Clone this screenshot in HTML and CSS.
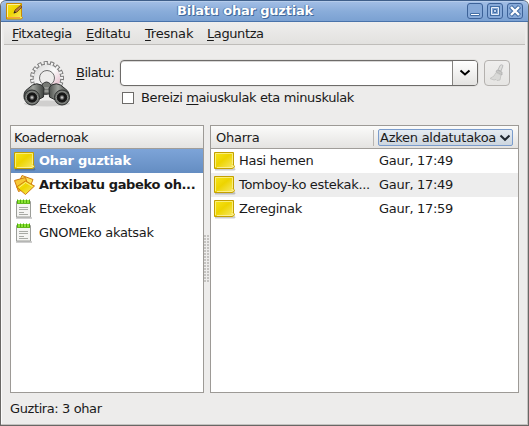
FILE: index.html
```html
<!DOCTYPE html>
<html lang="eu">
<head>
<meta charset="utf-8">
<title>Bilatu ohar guztiak</title>
<link rel="stylesheet" href="styles.css">
</head>
<body>
<svg class="defs" width="0" height="0" aria-hidden="true">
  <defs>
    <linearGradient id="yellow" x1="0" y1="0" x2="1" y2="1">
      <stop offset="0" stop-color="#f8e61c"/><stop offset=".45" stop-color="#edd400"/><stop offset="1" stop-color="#f8ea70"/>
    </linearGradient>
    <linearGradient id="gear" x1="0" y1="0" x2="1" y2="1">
      <stop offset="0" stop-color="#d6d6d6"/><stop offset=".5" stop-color="#fafafa"/><stop offset="1" stop-color="#dfa9bd"/>
    </linearGradient>
    <linearGradient id="barrel" x1="0" y1="0" x2="1" y2="0">
      <stop offset="0" stop-color="#4b4e4b"/><stop offset=".45" stop-color="#a0a39e"/><stop offset="1" stop-color="#3c3f3c"/>
    </linearGradient>
    <radialGradient id="lens">
      <stop offset="0" stop-color="#eee"/><stop offset=".25" stop-color="#777"/><stop offset=".5" stop-color="#111"/><stop offset="1" stop-color="#222"/>
    </radialGradient>
    <symbol id="note" viewBox="0 0 22 20">
      <path d="M1 18.500h19l1-1" fill="none" stroke="#000" stroke-opacity=".2" stroke-width="2"/>
      <path d="M.5 1.500h19v12.500l1 1.500q-.5 2-2.500 2H.5z" fill="url(#yellow)" stroke="#c4a000" stroke-linejoin="round"/>
      <path d="M1.500 16V2.500h17V13" fill="none" stroke="#fbf294" stroke-opacity=".8"/>
      <path d="M3 16.500h15l1.500-1.500-2-.5" fill="none" stroke="#fff3a0" stroke-opacity=".8"/>
    </symbol>
    <symbol id="pad" viewBox="0 0 18 20">
      <path d="M1 19h16" stroke="#000" stroke-opacity=".25" stroke-width="1.500"/>
      <path d="M1.500 2.500h14v15.500h-14z" fill="#f5f5f3" stroke="#9c9e99"/>
      <path d="M2 1h13v4H2z" fill="#8ae234"/>
      <path d="M2.500 .5v4M5.500 .5v4M8.500 .5v4M11.500 .5v4M14.500 .5v4" stroke="#4fae0c" stroke-width="1"/>
      <path d="M2 4.500h13" stroke="#63b81c"/>
      <path d="M4 8.500h9M4 10.500h9M4 13.500h5M4 15.500h9" stroke="#a8aaa5" stroke-width="1"/>
    </symbol>
  </defs>
</svg>
<div class="window">
  <header class="titlebar">
    <svg class="app-icon" viewBox="0 0 17 17">
      <path d="M.5.5h15v13l1 1-1 1.500H.5z" fill="url(#yellow)" stroke="#c98a00"/>
      <path d="M1.500 14V1.500H14" fill="none" stroke="#fcf19a"/>
      <path d="M1 14.500h13" stroke="#f7a13d"/>
      <path d="M8 10l1-3 5.500-4.500 1.500 1.500-5 5z" fill="#b77a3c" stroke="#6e4210" stroke-width=".8"/>
      <path d="M7.500 10.500l1.200-2.500 1.500 1.500z" fill="#222"/>
    </svg>
    <h1 class="title"><span>Bilatu ohar guztiak</span></h1>
    <div class="controls">
      <svg viewBox="0 0 16 16"><rect class="cb" x=".5" y=".5" width="15" height="15" rx="2.500"/><path d="M3.500 10.500h9v2h-9z" fill="#fff" stroke="#426ea5"/></svg>
      <svg viewBox="0 0 16 16"><rect class="cb" x=".5" y=".5" width="15" height="15" rx="2.500"/><path d="M4.500 4.500h7v7h-7z" fill="none" stroke="#426ea5" stroke-width="3"/><path d="M4.500 4.500h7v7h-7z" fill="#86a8d5" stroke="#e7eef8"/><path d="M6.500 6.500h3v3h-3z" fill="#bfd2ed" stroke="#426ea5"/></svg>
      <svg viewBox="0 0 16 16"><rect class="cb" x=".5" y=".5" width="15" height="15" rx="2.500"/><path d="M3.500 3.500l9 9M12.500 3.500l-9 9" stroke="#426ea5" stroke-width="4.400"/><path d="M4 4l8 8M12 4l-8 8" stroke="#fff" stroke-width="2.400"/></svg>
    </div>
  </header>
  <nav class="menubar">
    <a class="m1"><u>F</u>itxategia</a><a class="m2"><u>E</u>ditatu</a><a class="m3"><u>T</u>resnak</a><a class="m4"><u>L</u>aguntza</a>
  </nav>
  <section class="search">
    <svg class="find-icon" viewBox="0 0 48 48">
      <circle cx="24" cy="19" r="14.500" fill="none" stroke="#777" stroke-width="5" stroke-dasharray="3.900 2.173" transform="rotate(-8 24 19)"/>
      <circle cx="24" cy="19" r="13.800" fill="none" stroke="#858585" stroke-width="1.200"/>
      <circle cx="24" cy="19" r="14.500" fill="none" stroke="#f2f2f2" stroke-width="3.200" stroke-dasharray="2.100 3.973" stroke-dashoffset="-.9" transform="rotate(-8 24 19)"/>
      <circle cx="24" cy="19" r="13.200" fill="url(#gear)"/>
      <circle cx="24" cy="19" r="7.500" fill="#edeceb" stroke="#6d6d6d" stroke-width="1"/>
      <ellipse cx="24" cy="44.500" rx="23" ry="3" fill="#000" opacity=".12"/>
      <g transform="translate(.5 2)">
      <path d="M19 23q4-4 8 0l2 4v6h-12v-6z" fill="#767974" stroke="#333" stroke-width="1"/>
      <path d="M20 27h6M20 30h6" stroke="#b9bab7"/>
      <path d="M9 24q4-2.500 9 0l2.500 3-.5 9-8 4L.8 38q-1.500-7 3.200-10z" fill="url(#barrel)" stroke="#2e3030"/>
      <path d="M37 24q-4-2.500-9 0l-2.500 3 .5 9 8 4 11.200-2q1.500-7-3.200-10z" fill="url(#barrel)" stroke="#2e3030"/>
      <circle cx="8.500" cy="36.500" r="7.500" fill="#70736f" stroke="#2e3030"/><circle cx="8.500" cy="36.500" r="5.700" fill="url(#lens)" stroke="#a5a7a3" stroke-width=".7"/>
      <circle cx="38.500" cy="36.500" r="7.500" fill="#70736f" stroke="#2e3030"/><circle cx="38.500" cy="36.500" r="5.700" fill="url(#lens)" stroke="#a5a7a3" stroke-width=".7"/>
      </g>
    </svg>
    <label class="search-label"><span><u>B</u>ilatu:</span></label>
    <div class="fields">
      <div class="entry-row">
        <div class="combo"><div class="entry"></div><div class="drop"><svg width="12" height="8" viewBox="0 0 12 8"><path d="M1.500 1.500L6 5.500l4.500-4" fill="none" stroke="#000" stroke-width="2"/></svg></div></div>
        <div class="clear"><svg width="18" height="18" viewBox="0 0 18 18"><path d="M12 1.500q1.500-1.500 3 0l-2 5.500-3-1z" fill="#dededc" stroke="#bbb"/><path d="M9 6l5 2v3l-6-3z" fill="#c9c9c7" stroke="#aaa" stroke-width=".7"/><path d="M8 8.500l5 2.500-1 5-3 .5-1-1-2 .5-4-1.500q5-2 6-6z" fill="#d9d9d7" stroke="#c0c0be" stroke-width=".8"/></svg></div>
      </div>
      <div class="check-row"><i class="checkbox"></i><span class="check-label">Bereizi <u>m</u>aiuskulak eta minuskulak</span></div>
    </div>
  </section>
  <main class="panes">
    <section class="list notebooks">
      <div class="list-head"><span class="head-first">Koadernoak</span></div>
      <div class="row selected"><svg class="note"><use href="#note"/></svg><b class="all">Ohar guztiak</b></div>
      <div class="row"><svg class="note" viewBox="0 0 22 20">
        <path d="M8 .5l11 4-4 10-11-5z" fill="#fce45c" stroke="#d07a10"/>
        <path d="M.5 5.500l11-3 3 10-10 4z" fill="#f7c935" stroke="#d07a10"/>
        <path d="M2.500 12l9-6 9 5-9 8.500z" fill="url(#yellow)" stroke="#d07a10" stroke-linejoin="round"/>
        <path d="M5 12.500l6.500-5 7 4" fill="none" stroke="#fff3a0" stroke-opacity=".8"/>
      </svg><b class="unfiled">Artxibatu gabeko oh...</b></div>
      <div class="row"><svg class="note" viewBox="0 0 22 20"><use href="#pad" x="1" y="0" width="18" height="20"/></svg><span>Etxekoak</span></div>
      <div class="row"><svg class="note" viewBox="0 0 22 20"><use href="#pad" x="1" y="0" width="18" height="20"/></svg><span>GNOMEko akatsak</span></div>
    </section>
    <div class="grip"><i></i></div>
    <section class="list notes">
      <div class="list-head"><span class="head-name">Oharra</span><div class="sort"><span>Azken aldatutakoa</span><svg width="12" height="8" viewBox="0 0 12 8"><path d="M1.500 1.500L6 5.800l4.500-4.300" fill="none" stroke="#202830" stroke-width="2"/></svg></div></div>
      <div class="row"><svg class="note"><use href="#note"/></svg><span class="name">Hasi hemen</span><span class="date">Gaur, 17:49</span></div>
      <div class="row alt"><svg class="note"><use href="#note"/></svg><span class="name">Tomboy-ko estekak...</span><span class="date">Gaur, 17:49</span></div>
      <div class="row"><svg class="note"><use href="#note"/></svg><span class="name">Zereginak</span><span class="date">Gaur, 17:59</span></div>
    </section>
  </main>
  <footer class="status"><span>Guztira: 3 ohar</span></footer>
</div>
</body>
</html>
```
FILE: styles.css
```css
* { box-sizing: border-box; }
body { margin: 0; background: #fff; font: 13px/16px "DejaVu Sans", sans-serif; letter-spacing: -.3px; color: #1a1a1a; }
.defs { display: block; height: 0; }
h1 { margin: 0; font-size: inherit; }
u { text-decoration: underline; text-decoration-thickness: 1px; text-underline-offset: 2px; text-decoration-skip-ink: none; }
svg { flex: none; display: block; }
span, b, a { white-space: nowrap; }
.window { width: 529px; height: 426px; display: flex; flex-direction: column; background: #edeceb; border: 1px solid #696765; border-top: 0; border-bottom-width: 1px; border-radius: 6px 6px 0 0; box-shadow: inset -1px -1px #c4c2c0, inset 1px 0 #fbfbfb; overflow: hidden; }
.titlebar { flex: none; height: 22px; display: flex; align-items: flex-start; padding: 2px 5px 0 5px; border-top: 1px solid #3f5f8a; border-bottom: 1px solid #4a73aa; background: linear-gradient(#a3bfe6, #8aadda 50%, #7ba1d2); box-shadow: inset 0 1px #b5cceb; border-radius: 5px 5px 0 0; }
.app-icon { width: 17px; height: 17px; }
.title { flex: 1; text-align: center; color: #fff; letter-spacing: -.2px; text-shadow: 1px 1px #41699c, 0 0 1px #41699c, -1px 0 #5a82b8; }
.controls { display: flex; gap: 4px; }
.controls svg { width: 16px; height: 16px; }
.cb { fill: #86a9d8; stroke: #3c6298; }
.menubar { flex: none; height: 23px; margin: 0 3px; padding: 1px 0 0 8px; display: flex; align-items: center; background: linear-gradient(#efeeed, #e2e1df); border-bottom: 1px solid #bfbdba; }
.menubar a { flex: none; }
.m1 { width: 74px; letter-spacing: -.4px; }
.m2 { width: 59px; }
.m3 { width: 62px; letter-spacing: -.2px; }
.m4 { letter-spacing: -.4px; }
.search { flex: none; height: 80px; display: flex; padding: 15px 0 0 22px; }
.find-icon { width: 48px; height: 48px; margin-top: -1px; }
.search-label { width: 49px; padding: 5px 0 0 5px; letter-spacing: -.5px; }
.entry-row { display: flex; gap: 6px; }
.combo { width: 358px; height: 26px; display: flex; border: 1px solid #6d6b69; border-radius: 4px; background: #fff; box-shadow: inset 0 1px #d8d7d6, 0 0 0 1px #e2e1df; }
.entry { flex: 1; }
.drop { width: 25px; display: grid; place-items: center; border-left: 1px solid #858380; background: linear-gradient(#fff, #e4e3e1); border-radius: 0 3px 3px 0; }
.clear { width: 26px; height: 26px; display: grid; place-items: center; border: 1px solid #b4b1ae; border-radius: 4px; background: linear-gradient(#efeeed, #e6e5e3); }
.check-row { display: flex; align-items: center; height: 16px; margin: 4px 0 0 2px; gap: 7px; letter-spacing: -.37px; }
.checkbox { width: 12px; height: 12px; border: 1px solid #6d6b69; background: #fff; }
.panes { flex: none; height: 268px; display: flex; padding-left: 9px; }
.list { border: 1px solid #9d9a96; background: #fff; height: 268px; }
.notebooks { width: 194px; }
.notes { width: 309px; }
.grip { width: 6px; display: grid; place-items: center; }
.grip i { width: 6px; height: 48px; background: radial-gradient(circle at 1px 1px, #b5b3b0 .6px, transparent 1px) 0 0 / 3px 3px; }
.list-head { height: 23px; display: flex; align-items: center; padding: 1px 0 0 3px; letter-spacing: -.25px; background: linear-gradient(#fbfbfa, #e4e3e1); border-bottom: 1px solid #a09d99; }
.notes .list-head { padding-left: 5px; }
.head-name { width: 158px; height: 16px; border-right: 1px solid #b8b5b2; }
.sort { width: 135px; height: 17px; display: flex; align-items: center; gap: 3px; padding: 1px 0 0 1px; margin-left: 4px; border: 1px solid #7b9ccc; border-radius: 2px; background: linear-gradient(#e5ebf1, #cdd6df); }
.row { height: 24px; display: flex; align-items: center; padding-left: 3px; }
.note { width: 22px; height: 20px; margin-right: 3px; }
.selected { color: #fff; background: linear-gradient(#7da4d8, #648dc2); }
.all { letter-spacing: -.2px; }
.unfiled { letter-spacing: -.38px; }
.alt { background: #ededed; }
.name { width: 140px; }
.status { padding: 8px 0 0 9px; letter-spacing: -.4px; }
```
